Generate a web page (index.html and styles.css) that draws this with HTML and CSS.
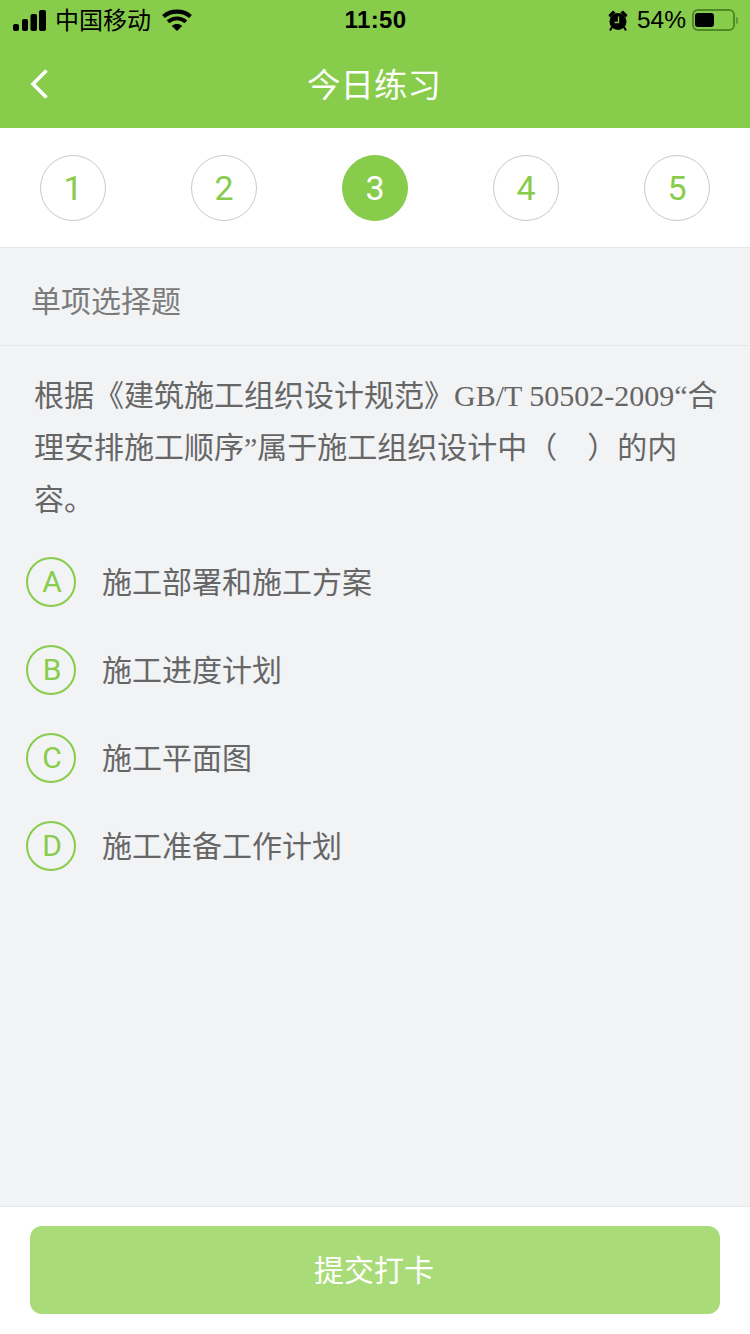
FILE: index.html
```html
<!DOCTYPE html>
<html lang="zh-CN">
<head>
    <meta charset="UTF-8">
    <meta name="viewport" content="width=device-width, initial-scale=1.0">
    <title>今日练习</title>
    <link rel="stylesheet" href="styles.css">
</head>
<body>
    <div class="page">
        <header class="top">
            <div class="status">
                <div class="status-left">
                    <svg class="signal" width="33" height="21" viewBox="0 0 33 21">
                        <rect x="0" y="14" width="6" height="7" rx="2"/>
                        <rect x="9" y="9" width="6" height="12" rx="2"/>
                        <rect x="17.500" y="4" width="6.500" height="17" rx="2"/>
                        <rect x="26" y="0" width="7" height="21" rx="2"/>
                    </svg>
                    <span class="carrier">中国移动</span>
                    <svg class="wifi" width="30" height="22" viewBox="0 0 30 22">
                        <path d="M1.500 7.500C9 1 21 1 28.500 7.500" fill="none" stroke="#000" stroke-width="4.200"/>
                        <path d="M6 12.800c5.500-4.500 12.500-4.500 18 0" fill="none" stroke="#000" stroke-width="4"/>
                        <path d="M9.800 17c3.200-2.600 7.200-2.600 10.400 0L15 22z"/>
                    </svg>
                </div>
                <div class="time">11:50</div>
                <div class="status-right">
                    <svg class="alarm" width="20" height="21" viewBox="0 0 20 21">
                        <circle cx="10" cy="11.500" r="8.500"/>
                        <path d="M.5 5L5 .5 7.500 2.500 2 7.500zM19.500 5L15 .5 12.500 2.500 18 7.500z"/>
                        <path d="M4 17l-2 3.500M16 17l2 3.500" stroke="#000" stroke-width="2"/>
                        <path d="M10.500 6.500V12.500H6.500" fill="none" stroke="#87cc4a" stroke-width="1.300"/>
                    </svg>
                    <span class="percent">54%</span>
                    <div class="battery"><div class="battery-level"></div></div>
                    <div class="battery-tip"></div>
                </div>
            </div>
            <div class="navbar">
                <div class="navbar-side">
                    <svg class="back" width="20" height="32" viewBox="0 0 20 32">
                        <path d="M17.500 2.500L4 16l13.500 13.500" fill="none" stroke="#fff" stroke-width="3.600"/>
                    </svg>
                </div>
                <h1>今日练习</h1>
                <div class="navbar-side"></div>
            </div>
        </header>

        <nav class="steps">
            <div class="step">1</div>
            <div class="step">2</div>
            <div class="step active">3</div>
            <div class="step">4</div>
            <div class="step">5</div>
        </nav>

        <main class="content">
            <div class="kind">单项选择题</div>
            <p class="question">根据《建筑施工组织设计规范》<span class="latin">GB/T 50502-2009“</span>合理安排施工顺序<span class="latin">”</span>属于施工组织设计中（　）的内容。</p>
            <ul class="options">
                <li class="option"><span class="letter">A</span><span class="option-text">施工部署和施工方案</span></li>
                <li class="option"><span class="letter">B</span><span class="option-text">施工进度计划</span></li>
                <li class="option"><span class="letter">C</span><span class="option-text">施工平面图</span></li>
                <li class="option"><span class="letter">D</span><span class="option-text">施工准备工作计划</span></li>
            </ul>
        </main>

        <footer class="bottom">
            <button class="submit">提交打卡</button>
        </footer>
    </div>
</body>
</html>
```

FILE: styles.css
```css
* {
    box-sizing: border-box;
}

body {
    margin: 0;
    font-family: "Liberation Sans", "Noto Sans CJK SC", sans-serif;
    background-color: #f2f3f5;
}

.page {
    display: flex;
    flex-direction: column;
    height: 1334px;
    overflow: hidden;
}

/* header */
.top {
    height: 128px;
    background-color: #87cc4a;
    flex: none;
}

.status {
    display: flex;
    align-items: center;
    justify-content: space-between;
    height: 40px;
    padding: 0 12px 0 13px;
    color: #000;
}

.status-left,
.status-right {
    display: flex;
    align-items: center;
    width: 260px;
}

.status-right {
    justify-content: flex-end;
}

.signal {
    margin-top: 1px;
}

.carrier {
    margin: 0 0 4px 9px;
    font-size: 24px;
}

.wifi {
    margin-left: 11px;
}

.time {
    font-size: 24px;
    font-weight: 700;
    letter-spacing: .4px;
}

.alarm {
    margin-right: 9px;
}

.percent {
    font-size: 24.500px;
    margin-right: 6px;
}

.battery {
    width: 43px;
    height: 22px;
    padding: 2px 1px;
    border: 2px solid #4f8a26;
    border-radius: 6px;
}

.battery-level {
    width: 19px;
    height: 100%;
    background-color: #000;
    border-radius: 3px;
}

.battery-tip {
    width: 2px;
    height: 7px;
    margin-left: 1px;
    background-color: #5f9a36;
    border-radius: 0 2px 2px 0;
}

.navbar {
    display: grid;
    grid-template-columns: 1fr auto 1fr;
    align-items: center;
    height: 88px;
}

.navbar-side {
    display: flex;
    align-items: center;
    padding-left: 29px;
}

.navbar h1 {
    margin: 0 2px 4px 0;
    font-size: 33.500px;
    font-weight: 400;
    color: #fff;
}

/* question numbers */
.steps {
    display: flex;
    justify-content: space-between;
    height: 120px;
    padding: 27px 40px 0;
    background-color: #fff;
    border-bottom: 1px solid #e6e7e9;
    flex: none;
}

.step {
    display: flex;
    align-items: center;
    justify-content: center;
    width: 66px;
    height: 66px;
    border: 1px solid #c9c9c9;
    border-radius: 50%;
    font-family: Roboto, sans-serif;
    font-size: 34px;
    color: #87cc4a;
}

.step.active {
    background-color: #87cc4a;
    border-color: #87cc4a;
    color: #fff;
}

/* question */
.content {
    flex: 1;
}

.kind {
    display: flex;
    align-items: center;
    height: 98px;
    padding: 4px 31px 0;
    font-size: 30px;
    color: #7b7b7b;
    border-bottom: 1px solid #e6e7e9;
}

.question {
    margin: 0;
    padding: 24px 30px 0 34px;
    font-size: 30px;
    line-height: 52.170px;
    color: #666;
}

.latin {
    font-family: "Liberation Serif", serif;
}

.options {
    list-style: none;
    margin: 0;
    padding: 30px 0 0 26px;
}

.option {
    display: flex;
    align-items: center;
    height: 50px;
    margin-bottom: 38px;
    font-size: 30px;
    color: #666;
}

.option-text {
    margin-bottom: 4px;
}

.letter {
    display: flex;
    align-items: center;
    justify-content: center;
    width: 50px;
    height: 50px;
    margin-right: 26px;
    padding-left: 2px;
    border: 2px solid #87cc4a;
    border-radius: 50%;
    font-family: Roboto, sans-serif;
    font-size: 30px;
    color: #87cc4a;
}

/* submit */
.bottom {
    height: 128px;
    padding: 19px 30px 0;
    background-color: #fff;
    border-top: 1px solid #e6e7e9;
    flex: none;
}

.submit {
    display: block;
    width: 100%;
    height: 88px;
    padding: 0 2px 4px 0;
    border: none;
    border-radius: 12px;
    background-color: #aadb79;
    color: #fff;
    font-family: inherit;
    font-size: 30px;
}
```
